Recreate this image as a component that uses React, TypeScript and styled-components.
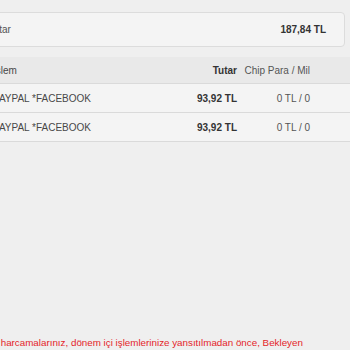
import React from "react";
import styled, { createGlobalStyle } from "styled-components";

const GlobalStyle = createGlobalStyle`
  html, body {
    margin: 0;
    padding: 0;
    background: #efefef;
    overflow: hidden;
  }
  body {
    font-family: "Liberation Sans", Arial, sans-serif;
    width: 350px;
    height: 350px;
  }
`;

const Page = styled.div`
  width: 420px;
  margin-left: -70px;
  padding-top: 12px;
`;

const SummaryCard = styled.div`
  display: flex;
  align-items: center;
  justify-content: space-between;
  height: 33px;
  margin-right: 5px;
  padding: 0 18px 0 22px;
  background: #f4f4f4;
  border: 1px solid #dcdcdc;
  border-radius: 4px;
  font-size: 10px;
  color: #555;
`;

const SummaryValue = styled.span`
  font-weight: bold;
  color: #333;
`;

const Table = styled.div`
  margin-top: 10px;
  width: 100%;
`;

const Row = styled.div<{ $head?: boolean }>`
  display: flex;
  align-items: center;
  height: ${({ $head }) => ($head ? "26px" : "28px")};
  padding-left: 63px;
  background: ${({ $head }) => ($head ? "#e9e9e9" : "#f4f4f4")};
  border-bottom: 1px solid #dadada;
  font-size: 10px;
  color: #484848;
`;

const Desc = styled.div`
  flex: 1;
  white-space: nowrap;
`;

const Amount = styled.div`
  width: 80px;
  text-align: right;
  font-weight: bold;
  color: #333;
`;

const Chip = styled.div`
  width: 73px;
  text-align: right;
  color: #555;
  white-space: nowrap;
`;

const Tail = styled.div`
  width: 40px;
`;

const Note = styled.p`
  margin: 195px 0 0;
  padding: 0 30px 0 50px;
  font-size: 9.8px;
  line-height: 11px;
  color: #e4252a;
`;

const rows = [
  { desc: "PAYPAL *FACEBOOK", amount: "93,92 TL", chip: "0 TL / 0" },
  { desc: "PAYPAL *FACEBOOK", amount: "93,92 TL", chip: "0 TL / 0" },
];

export default function App() {
  return (
    <>
      <GlobalStyle />
      <Page>
        <SummaryCard>
          <span>Toplam Tutar</span>
          <SummaryValue>187,84 TL</SummaryValue>
        </SummaryCard>
        <Table>
          <Row $head>
            <Desc>İşlem</Desc>
            <Amount>Tutar</Amount>
            <Chip>Chip Para / Mil</Chip>
            <Tail />
          </Row>
          {rows.map((r, i) => (
            <Row key={i}>
              <Desc>{r.desc}</Desc>
              <Amount>{r.amount}</Amount>
              <Chip>{r.chip}</Chip>
              <Tail />
            </Row>
          ))}
        </Table>
        <Note>
          Kart harcamalarınız, dönem içi işlemlerinize yansıtılmadan önce, Bekleyen
          İşlemler ekranında görüntülenir. Tutar ve işlem bilgileri kesinleştiğinde
          ekstrenize yansıtılır.
        </Note>
      </Page>
    </>
  );
}
